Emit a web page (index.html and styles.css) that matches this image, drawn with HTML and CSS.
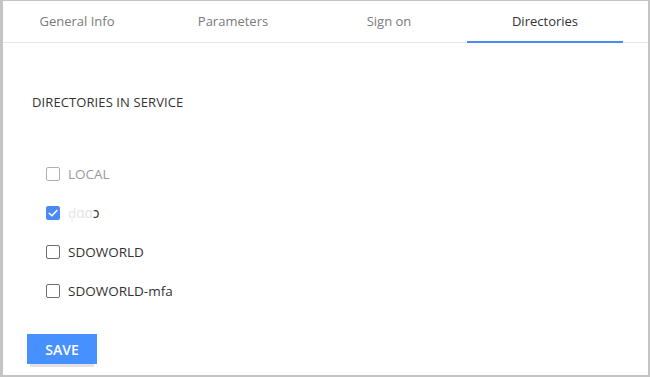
FILE: index.html
```html
<!DOCTYPE html>
<html>
<head>
<meta charset="utf-8">
<link rel="stylesheet" href="styles.css">
</head>
<body>
<div class="frame">
  <nav class="tabs">
    <div class="tab">General Info</div>
    <div class="tab">Parameters</div>
    <div class="tab">Sign on</div>
    <div class="tab active">Directories</div>
  </nav>
  <main class="content">
    <h2 class="heading">DIRECTORIES IN SERVICE</h2>
    <ul class="dirs">
      <li class="dir disabled"><span class="box"></span><span class="label">LOCAL</span></li>
      <li class="dir"><span class="box checked"><svg viewBox="0 0 14 14" width="14" height="14"><path d="M3.2 7.2 L5.9 9.8 L10.9 4.4" fill="none" stroke="#fff" stroke-width="1.5" stroke-linecap="round" stroke-linejoin="round"/></svg></span><span class="label"><span class="blur">ḍ̣ɑɑ</span>ɔ</span></li>
      <li class="dir"><span class="box"></span><span class="label">SDOWORLD</span></li>
      <li class="dir"><span class="box"></span><span class="label">SDOWORLD-mfa</span></li>
    </ul>
    <button class="save">SAVE</button>
  </main>
</div>
</body>
</html>
```

FILE: styles.css
```css
* { box-sizing: border-box; }
html, body { margin: 0; padding: 0; background: #fff; }
body { font-family: "Open Sans", "Noto Sans", sans-serif; }
.frame {
  width: 650px;
  height: 377px;
  border-style: solid;
  border-color: #c4c4c4;
  border-width: 1px 2px 2px 3px;
  background: #fff;
  overflow: hidden;
}
.tabs {
  display: flex;
  height: 42px;
  border-bottom: 1px solid #e6e6e6;
  margin-left: -4px;
}
.tab {
  position: relative;
  width: 156px;
  display: flex;
  align-items: center;
  justify-content: center;
  font-size: 13px;
  color: #7a7a7a;
  padding-bottom: 2px;
}
.tab.active { color: #333; }
.tab.active::after {
  content: "";
  position: absolute;
  left: 0; right: 0; bottom: -1px;
  height: 2px;
  background: #4a8af4;
}
.content {
  padding: 0 0 0 24px;
}
.heading {
  margin: 51px 0 0 5px;
  font-size: 13px;
  line-height: 16px;
  font-weight: 400;
  color: #333;
  letter-spacing: 0.1px;
}
.dirs {
  list-style: none;
  margin: 57px 0 0 19px;
  padding: 0;
  display: flex;
  flex-direction: column;
  gap: 25px;
}
.dir {
  display: flex;
  align-items: center;
  height: 14px;
  gap: 8px;
  font-size: 13.5px;
  color: #333;
}
.box {
  width: 14px;
  height: 14px;
  border: 1.5px solid #6f6f6f;
  border-radius: 2px;
  display: flex;
  flex: none;
}
.dir.disabled .box { border-color: #b0b0b0; }
.dir.disabled .label { color: #9a9a9a; }
.box.checked { background: #4a8af4; border-color: #4a8af4; }
.box.checked svg { margin: -1.5px; }
.blur { color: #e4e4e4; }
.save {
  margin-top: 36px;
  width: 70px;
  height: 30px;
  border: none;
  background: #4690ff;
  color: #fff;
  font-family: "Open Sans", "Noto Sans", sans-serif;
  font-size: 14px;
  font-weight: 600;
  box-shadow: 0 6px 0 -3px #e2e2e2;
  padding: 0;
}
```
